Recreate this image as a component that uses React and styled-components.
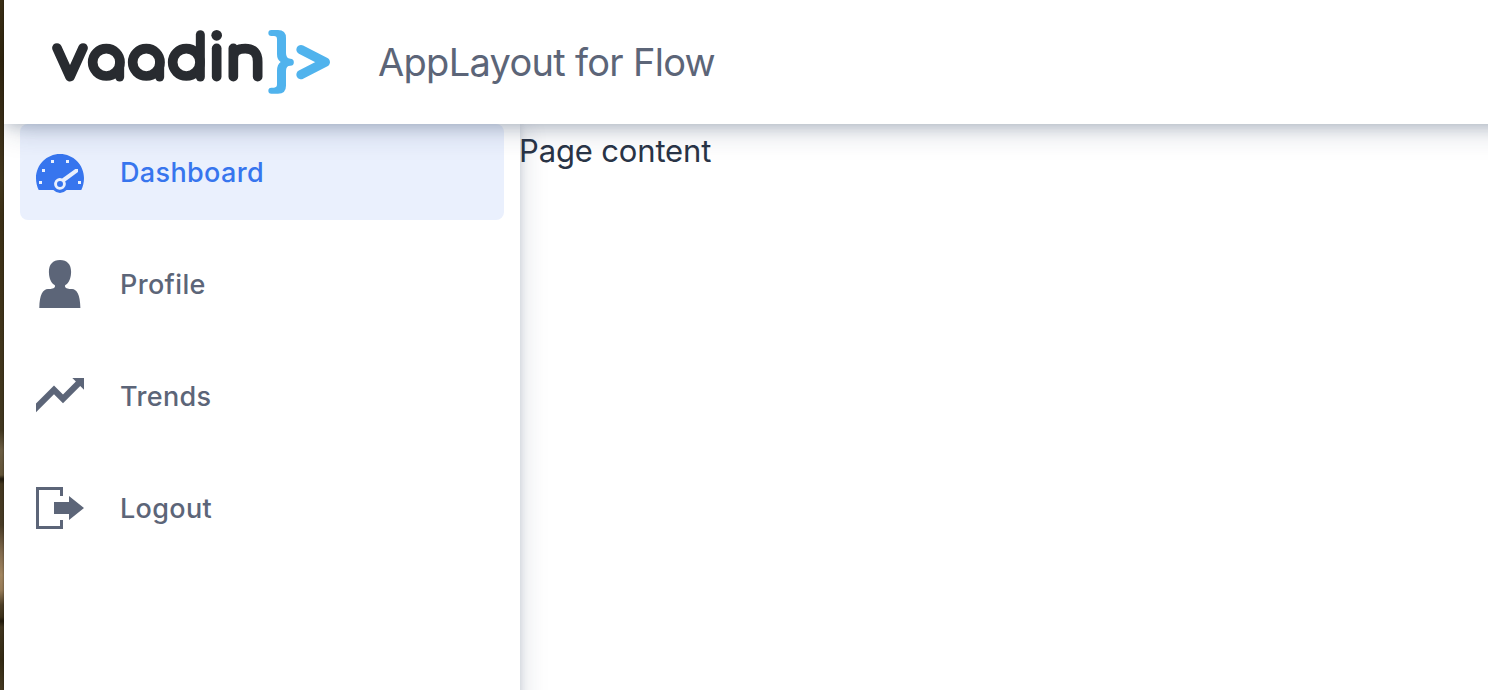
import React from 'react';
import styled, { createGlobalStyle } from 'styled-components';

const GlobalStyle = createGlobalStyle`
  * { box-sizing: border-box; }
  body { margin: 0; background: #fff; font-family: Inter, "Liberation Sans", sans-serif; overflow: hidden; }
`;

const Screen = styled.div`
  display: flex;
  width: 100%;
  height: 100vh;
  overflow: hidden;
`;

const Backdrop = styled.div`
  flex: 0 0 4px;
  background:
    linear-gradient(90deg, transparent 2px, rgba(0, 0, 0, 0.22) 4px),
    linear-gradient(180deg, #3a2e15 0, #2e240e 60px, #392d17 130px, #43371c 180px, #3b2f15 215px, #41351b 345px,
      #41371f 430px, #6b5d43 450px, #625438 475px, #1f180c 479px, #43371f 484px, #483b25 525px,
      #80694c 552px, #a1855f 575px, #967b57 590px, #4d3f27 605px, #3c3019 617px, #21190b 621px,
      #40351f 627px, #342a13 660px, #453921 690px);
`;

/* The window runs past the right and bottom edges of the screen. */
const Layout = styled.div`
  flex: 1;
  min-width: 0;
  margin: 0 -40px -40px 0;
  display: flex;
  flex-direction: column;
  overflow: hidden;
`;

const Navbar = styled.header`
  position: relative;
  z-index: 2;
  flex: 0 0 124px;
  display: flex;
  align-items: center;
  padding-left: 48px;
  background: #fff;
  box-shadow: 0 4px 12px -2px rgba(28, 52, 84, 0.18), 0 8px 28px -4px rgba(28, 48, 80, 0.26);
`;

const Logo = styled.svg`
  display: block;
  width: 280px;
  height: 66px;
`;

const Title = styled.h1`
  margin: 0 0 0 46px;
  font-size: 38px;
  font-weight: 400;
  line-height: 48px;
  letter-spacing: -0.7px;
  color: #5c6578;
  white-space: nowrap;
`;

const Body = styled.div`
  flex: 1;
  min-height: 0;
  display: flex;
`;

const Drawer = styled.nav`
  position: relative;
  z-index: 1;
  flex: 0 0 516px;
  display: flex;
  flex-direction: column;
  gap: 16px;
  padding: 0 16px;
  background: #fff;
  box-shadow: 0 0 8px -1px rgba(28, 52, 84, 0.18), 0 0 28px -4px rgba(28, 48, 80, 0.25);
`;

const Item = styled.a`
  display: flex;
  align-items: center;
  gap: 36px;
  height: 96px;
  padding: 0 16px;
  border-radius: 8px;
  font-size: 27px;
  font-weight: 500;
  letter-spacing: 0.35px;
  color: ${(p) => (p.$active ? '#3775ee' : '#5c6578')};
  background: ${(p) => (p.$active ? '#eaf0fd' : 'transparent')};
`;

const Icon = styled.svg`
  display: block;
  width: 48px;
  height: 48px;
  fill: currentColor;
`;

const Content = styled.main`
  position: relative;
  z-index: 1;
  flex: 1;
  padding-top: 1px;
  margin-left: -1px;
  font-size: 31px;
  line-height: 52px;
  letter-spacing: -0.15px;
  color: #293446;
`;

function VaadinLogo() {
  return (
    <Logo viewBox="36 27 840 198" aria-label="vaadin">
      <g fill="none" stroke="#282b30" strokeWidth="29" strokeLinecap="round" strokeLinejoin="round">
        <path d="M51 84 90 170 129 84" />
        <circle cx="199" cy="127" r="41" />
        <path d="M239 127V171" strokeWidth="27" />
        <circle cx="319" cy="127" r="41" />
        <path d="M359 127V171" strokeWidth="27" />
        <circle cx="439" cy="127" r="41" />
        <path d="M481 44V171" strokeWidth="27" />
        <path d="M530 85V170" />
        <path d="M580 85V170M580 115Q580 86 616 86Q653 86 653 125V170" />
      </g>
      <circle cx="530" cy="46" r="16" fill="#282b30" />
      <path
        fill="#50b3ed"
        d="M694 30H714Q738 30 738 54V99Q738 116 751 116A10 10 0 0 1 751 137Q738 137 738 153V197Q738 221 714 221H694A9 9 0 0 1 694 203H702Q711 203 711 193V152Q711 134 722 126Q711 119 711 102V58Q711 48 702 48H694A9 9 0 0 1 694 30Z"
      />
      <path d="M783 89 856 126.500 783 164" fill="none" stroke="#50b3ed" strokeWidth="28" strokeLinecap="round" strokeLinejoin="round" />
    </Logo>
  );
}

const icons = {
  dashboard: (
    <path
      fillRule="evenodd"
      d="M8 2C3.600 2 0 5.600 0 10 0 11.500.300 12.800.900 14H5.800A3 3 0 0 0 10.200 14H15.100C15.700 12.800 16 11.500 16 10 16 5.600 12.400 2 8 2ZM5 4H6V5H5ZM10 4H11V5H10ZM2 7H3V8H2ZM1 11H2V12H1ZM14 11H15V12H14ZM9.950 12A1.950 1.950 0 1 1 8.700 10.150L13.100 7H14V8L9.700 11.200Q9.950 11.600 9.950 12ZM8 11A1 1 0 1 0 8 13 1 1 0 1 0 8 11Z"
    />
  ),
  profile: (
    <path d="M9.700 8.900C9.500 8.600 9.800 8.200 10.200 8.100 11.200 7.300 11.700 5.500 11.700 3.900 11.700 1.500 10.400 0 8 0S4.300 1.500 4.300 3.900C4.300 5.500 4.800 7.300 5.800 8.100 6.200 8.300 6.500 8.600 6.300 8.900 6.100 9.500 5.200 9.700 4 9.700 2.300 9.800 1.200 11.500 1.100 16H14.800C14.700 11.500 13.600 9.800 12 9.700 10.800 9.700 9.900 9.500 9.700 8.900Z" />
  ),
  trends: <path d="M16 2H12.100L13.300 3.200 9 7.500 6 4.500 0 10.500V13.400L6 7.400 9 10.400 14.750 4.650 16 5.900Z" />,
  logout: <path d="M0 1H9V4H8V2H1V14H8V12H9V15H0ZM6 6H11V4L16 8 11 12V10H6Z" />,
};

const items = [
  { icon: 'dashboard', label: 'Dashboard', active: true },
  { icon: 'profile', label: 'Profile' },
  { icon: 'trends', label: 'Trends' },
  { icon: 'logout', label: 'Logout' },
];

export default function App() {
  return (
    <>
      <GlobalStyle />
      <Screen>
        <Backdrop />
        <Layout>
          <Navbar>
            <VaadinLogo />
            <Title>AppLayout for Flow</Title>
          </Navbar>
          <Body>
            <Drawer>
              {items.map((item) => (
                <Item key={item.label} $active={item.active}>
                  <Icon viewBox="0 0 16 16">{icons[item.icon]}</Icon>
                  <span>{item.label}</span>
                </Item>
              ))}
            </Drawer>
            <Content>Page content</Content>
          </Body>
        </Layout>
      </Screen>
    </>
  );
}
